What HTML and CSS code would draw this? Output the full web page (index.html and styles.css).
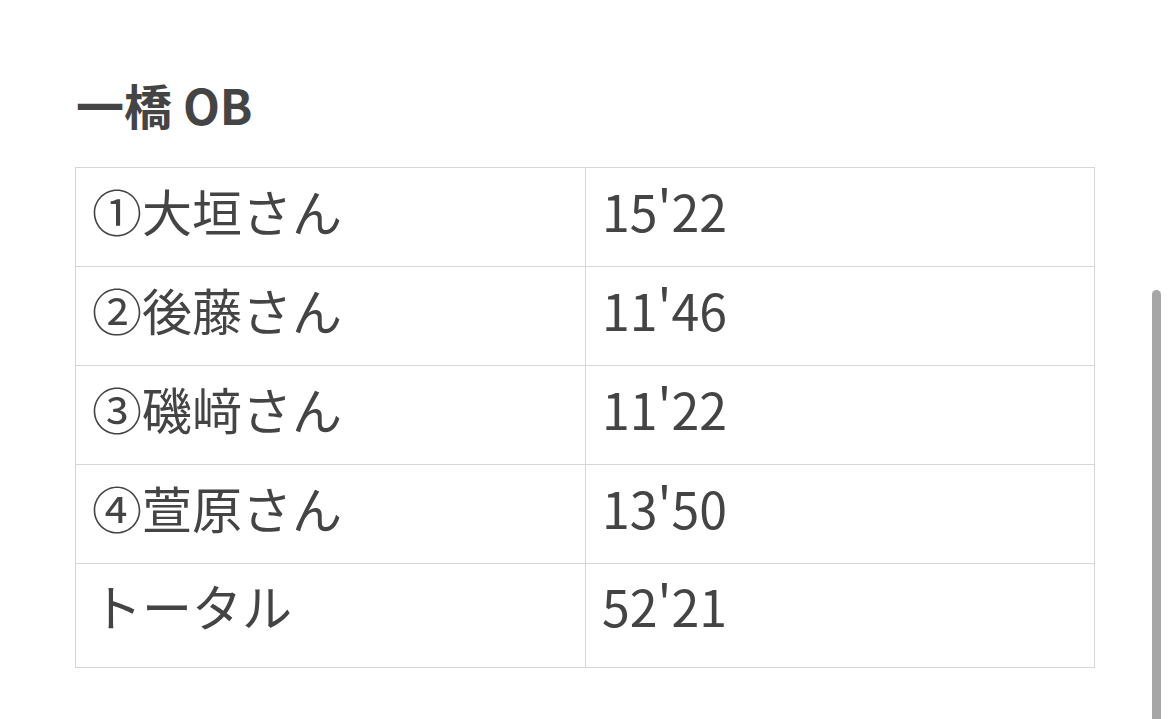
FILE: index.html
```html
<!DOCTYPE html>
<html lang="ja">
<head>
<meta charset="utf-8">
<link rel="stylesheet" href="styles.css">
</head>
<body>
<div class="page">
  <h2 class="title">一橋 OB</h2>
  <table class="times">
    <tr><td>①大垣さん</td><td>15'22</td></tr>
    <tr><td>②後藤さん</td><td>11'46</td></tr>
    <tr><td>③磯﨑さん</td><td>11'22</td></tr>
    <tr><td>④萱原さん</td><td>13'50</td></tr>
    <tr class="total"><td>トータル</td><td>52'21</td></tr>
  </table>
</div>
<div class="scrollbar"></div>
</body>
</html>
```
FILE: styles.css
```css
html, body {
  margin: 0;
  padding: 0;
  background: #ffffff;
  overflow: hidden;
}
body {
  width: 1170px;
  height: 719px;
  position: relative;
  font-family: "Noto Sans CJK JP", "Noto Sans", sans-serif;
  color: #444444;
}
.page {
  padding: 76px 0 0 75px;
}
.title {
  margin: 0 0 0 1px;
  font-size: 48px;
  font-weight: 700;
  line-height: 56px;
  height: 91px;
  letter-spacing: 0;
}
.times {
  border-collapse: collapse;
  width: 1020px;
  table-layout: fixed;
}
.times td {
  border: 1px solid #d6d6d6;
  height: 99px;
  padding: 0 16px;
  font-size: 50px;
  line-height: 1;
  vertical-align: middle;
  box-sizing: border-box;
  padding-bottom: 14px;
}
.times td:first-child {
  width: 510px;
}
.times .total td {
  height: 104px;
  padding-bottom: 22px;
}
.scrollbar {
  position: absolute;
  left: 1152px;
  top: 290px;
  width: 9px;
  height: 440px;
  border-radius: 5px;
  background: #a6a6a6;
}
```
